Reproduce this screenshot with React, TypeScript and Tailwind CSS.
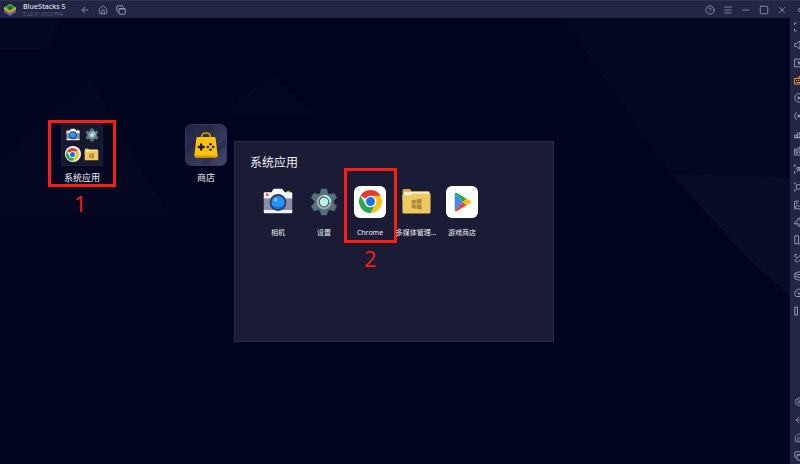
import React from 'react';
import { ArrowLeft, ChevronsLeft, CircleHelp, House, Menu, Minus, Settings, Square, X } from 'lucide-react';

type IconProps = { className?: string };

const CameraIcon: React.FC<IconProps> = ({ className }) => (
  <svg viewBox="0 0 32 32" className={className} aria-hidden="true">
    <rect x="25" y="4" width="4" height="4" rx="1" fill="#6abf1e" />
    <path d="M2 5.500h7l2-3q.5-.7 1.300-.7h7.400q.8 0 1.300.7l2 3h7q1.200 0 1.200 1.200v6.300H.8V6.700q0-1.200 1.200-1.200z" fill="#f7f9ff" />
    <path d="M.8 12h30.400v13H.8z" fill="#8b8dab" />
    <path d="M.8 24.500h30.400v2.300q0 1.200-1.200 1.200H2q-1.200 0-1.200-1.200z" fill="#eef1fc" />
    <rect x="3" y="7" width="3" height="2.500" rx="1" fill="#f0483c" />
    <circle cx="16" cy="16.500" r="9" fill="#333a5c" />
    <circle cx="16" cy="16.500" r="7" fill="#2296ff" />
    <path d="M10 20a7 7 0 0 0 12.500-.5q-6 3-12.500.5z" fill="#1574e5" />
    <circle cx="13.500" cy="13.500" r="1.600" fill="#8fd2ff" />
  </svg>
);

const GearIcon: React.FC<IconProps> = ({ className }) => (
  <svg viewBox="0 0 32 32" className={className} aria-hidden="true">
    <g fill="#587078" stroke="#587078" strokeWidth="1.500" strokeLinejoin="round">
      <circle cx="16" cy="16" r="10.500" />
      {[0, 60, 120, 180, 240, 300].map((deg) => (
        <path key={deg} d="M12 7l1.300-5.500h5.400L20 7z" transform={`rotate(${deg} 16 16)`} />
      ))}
    </g>
    <circle cx="16" cy="16" r="7.300" fill="#4c5e69" stroke="#a5b1b8" strokeWidth="2.200" />
    <path d="M16 8.700a7.300 7.300 0 0 1 7.300 7.300" fill="none" stroke="#a5f7e2" strokeWidth="2.200" />
    <circle cx="16" cy="16" r="4.200" fill="#a0ffe6" stroke="#e2e8e8" strokeWidth="1.200" />
  </svg>
);

const ChromeLogo: React.FC<IconProps> = ({ className }) => (
  <svg viewBox="0 0 24 24" className={className} aria-hidden="true">
    <path d="M12 12L1.600 6A12 12 0 0 1 22.400 6z" fill="#e33b2e" />
    <path d="M12 6h10.400A12 12 0 0 1 12 24l5.200-9z" fill="#fcc31e" />
    <path d="M1.600 6l5.200 9A6 6 0 0 0 17.200 15L12 24A12 12 0 0 1 1.600 6z" fill="#2da44e" />
    <circle cx="12" cy="12" r="6" fill="#fff" />
    <circle cx="12" cy="12" r="4.700" fill="#1a73e8" />
  </svg>
);

const ChromeIcon = () => (
  <span className="flex size-8 items-center justify-center rounded-md bg-white">
    <ChromeLogo className="size-[23px]" />
  </span>
);

const FolderIcon: React.FC<IconProps> = ({ className }) => (
  <svg viewBox="0 0 32 32" className={className} aria-hidden="true">
    <path d="M1.500 5q0-2 2-2h5q1 0 1.500 1l.8 1.500H28q2 0 2 2V16H1.500z" fill="#d9ac4e" />
    <path d="M3 6h26V12H3z" fill="#f6ecd0" />
    <path d="M1.500 9.500h8.300l2-1.500h18.700v19q0 1.500-1.500 1.500H3q-1.500 0-1.500-1.500z" fill="#f0c860" />
    <path d="M11 14.800l4.200-.7v4.300H11zM16 14l5.200-.8v5.200H16zM11 19.200h4.200v4.300l-4.200-.7zM16 19.200h5.200v5.200L16 23.600z" fill="#ab8a3c" />
  </svg>
);

const PlayIcon = () => (
  <span className="flex size-8 items-center justify-center rounded-md bg-white">
    <svg viewBox="0 0 20 22" className="h-5 w-5" aria-hidden="true">
      <path d="M2 1.500v19L11 11z" fill="#4285f4" />
      <path d="M2 1.500Q3 .3 4.500 1.200L15 7.300 11 11z" fill="#22a853" />
      <path d="M2 20.500q1 1.200 2.500.3L15 14.700 11 11z" fill="#ea4335" />
      <path d="M15 7.300l4 2.300q1.700 1.400 0 2.800l-4 2.300L11 11z" fill="#fbbc04" />
    </svg>
  </span>
);

const StoreIcon = () => (
  <svg viewBox="0 0 42 42" className="size-[42px]" aria-hidden="true">
    <defs>
      <linearGradient id="store" x1="0" y1="0" x2="1" y2="1">
        <stop offset="0" stopColor="#20233f" />
        <stop offset="1" stopColor="#41456a" />
      </linearGradient>
    </defs>
    <rect x=".5" y=".5" width="41" height="41" rx="6" fill="url(#store)" stroke="#34385a" />
    <path d="M1 23L23 1h8L1 31zM14 41L41 14v8L22 41z" fill="#191c35" opacity=".3" />
    <path d="M16.500 13.500q0-4.500 4.500-4.500t4.500 4.500" fill="none" stroke="#d29b0b" strokeWidth="1.600" />
    <path d="M12.500 13h17q1 0 1.100 1l2 17.500q.1 2-1.600 2H11q-1.700 0-1.600-2l2-17.500q.1-1 1.100-1z" fill="#ffc20e" />
    <path d="M9.500 31.500q0 2 1.500 2h20q1.700 0 1.600-2z" fill="#d99d08" />
    <path d="M15 19.500h2.400v2.300h2.300v2.400h-2.300v2.300H15v-2.300h-2.300v-2.400H15z" fill="#20233f" />
    <g fill="#20233f">
      <circle cx="25.500" cy="20.300" r="1.300" />
      <circle cx="25.500" cy="25.700" r="1.300" />
      <circle cx="22.800" cy="23" r="1.300" />
      <circle cx="28.200" cy="23" r="1.300" />
    </g>
  </svg>
);

const BlueStacksLogo = () => (
  <svg viewBox="0 0 28 28" className="size-[14px]" aria-hidden="true">
    <path d="M2 18l12 8 12-8v-3H2z" fill="#2a78e4" />
    <path d="M2 14.500l12 8 12-8V11H2z" fill="#f04025" />
    <path d="M2 11.500l12 8 12-8V9H2z" fill="#ffd21f" />
    <path d="M2 9.500L13 2.500q1-.6 2 0l11 7L15 17q-1 .6-2 0z" fill="#39c13d" />
    <path d="M8 9.500l6-4 6 4-6 4z" fill="#24263f" />
    <path d="M11 9.500l3-2 3 2-3 2z" fill="#f04025" />
  </svg>
);

// Two stacked windows
const RecentIcon: React.FC<{ size?: number; className?: string }> = ({ size = 10, className }) => (
  <svg width={size} height={size} viewBox="0 0 10 10" fill="none" stroke="currentColor" className={className} aria-hidden="true">
    <path d="M2.500 6.500h-1q-.7 0-.7-.7V1.500q0-.7.7-.7h5q.7 0 .7.700v1" />
    <rect x="3" y="3.500" width="6.300" height="5.700" rx=".6" />
    <path d="M3 4h6.300" />
  </svg>
);

const APPS = [
  { name: '相机', icon: <CameraIcon className="size-[30px]" /> },
  { name: '设置', icon: <GearIcon className="size-7" /> },
  { name: 'Chrome', icon: <ChromeIcon />, step: 2 },
  { name: '多媒体管理...', icon: <FolderIcon className="size-[31px]" /> },
  { name: '游戏商店', icon: <PlayIcon /> },
];

const NAV = [
  { label: '返回', Icon: ArrowLeft },
  { label: '主页', Icon: House },
  { label: '最近', Icon: RecentIcon },
];

const WINDOW_CONTROLS = [
  { label: '帮助', Icon: CircleHelp },
  { label: '菜单', Icon: Menu },
  { label: '最小化', Icon: Minus },
  { label: '最大化', Icon: Square },
  { label: '关闭', Icon: X },
];

// line = stroked outline, solid = filled parts, both on a 10x10 grid
const TOOLS = [
  { label: '全屏', line: 'M.5 3V1h2M7.500 1h2v2M9.500 7v2h-2M2.500 9h-2V7' },
  { label: '音量', line: 'M.7 3.500v3h1.800L6 9V1L2.500 3.500zM8 3.500q1.200 1.500 0 3' },
  { label: '锁定光标', line: 'M.6 1.200h8.800v7.600H.6z', solid: 'M3.200 3l4.300 1.600-1.800.8-.8 1.900z' },
  { label: '键盘控制', line: 'M.6 3.500h8.800v5.500H.6zM5 3.500V1.500h2', solid: 'M2 5h1.200v1H2zM4 5h1.200v1H4zM6 5h1.200v1H6zM2.500 7h5v1h-5z', active: true },
  { label: '同步操作', line: 'M8 1.800A4.300 4.300 0 1 0 9.300 5', solid: 'M3.700 3l3.500 2-3.500 2z' },
  { label: '宏', line: 'M3 1.200a4.300 4.300 0 0 0 0 7.600M6 .9a4.300 4.300 0 0 1 1 7.700', solid: 'M3.600 3.600h2.800v2.800H3.600z' },
  { label: '多开', line: 'M.6 6h2.200v2.800H.6zM3.500 3.800h2.200v5H3.500zM6.500 1.500h2.200v7.300H6.500z', solid: 'M.6 8h8.800v1H.6z' },
  { label: '安装 APK', line: 'M.6 3h8.800v6H.6zM.6 5h8.800M5 3V1h3v2', solid: 'M2 6h2v1.500H2zM5 6h3v1.500H5z' },
  { label: '截图', line: 'M.5 3V1h1.700M7.800 1h1.700v2M9.500 7v2H7.800M2.200 9H.5V7M3 3.500h4v3.200H3z', solid: 'M4 4.300h2v1.500H4z' },
  { label: '录屏', line: 'M.5 2.500V1h1.200M8.300 1h1.200v1.500M9.500 7.500V9H8.300M1.700 9H.5V7.500M2.300 2.800h5.400v4.400H2.300z' },
  { label: '媒体', line: 'M5 1.200H.6v7.600h8.800V5M1 8l2.500-3 2 2L7 5.500', solid: 'M6 1h3v2.500H6zM2 2.500h1.500V4H2z' },
  { label: '飞行', line: 'M4 9V6.500L.6 7V5.500L4 3.300V1.500q1-1.200 2 0v1.800l3.400 2.200V7L6 6.500V9z' },
  { label: '旋转', line: 'M.8.800h3.700v8H.8zM6 5h3.400v3.800H4.500' },
  { label: '摇一摇', line: 'M1 4V1.500h2M.8 7.500L6.500 2l2.500 2.500L3.500 9.200zM3 5L1.500 3.500' },
  { label: '内存', line: 'M.8 2.500Q5-.7 9.200 2.500v5Q5 10.700.8 7.500zM.8 2.500Q5 5.500 9.200 2.500M.8 5Q5 8 9.200 5' },
  { label: '性能', line: 'M2 8.500A4.300 4.300 0 1 1 8 8.500zM5 5.500L3 3.500', solid: 'M4 5h2v1.500H4z' },
  { label: '分屏', line: 'M.8 1h2.700v8H.8zM6 1h.8M6 5h.8M6 9h.8' },
];

const SYSTEM_TOOLS = [
  { label: '设置', Icon: Settings },
  ...NAV,
];

// Faint facets behind the desktop
const Wallpaper = () => (
  <svg
    viewBox="0 0 790 446"
    preserveAspectRatio="none"
    className="absolute inset-0 size-full"
    aria-hidden="true"
  >
    <path d="M0 0h62L46 31H0z" fill="#040822" />
    <path d="M563 0h227v158H671z" fill="#030722" />
    <path d="M671 156l119 3v119l-42-37z" fill="#080c27" />
    <path d="M90 62l78 135H0v-52z" fill="#030721" />
    <path d="M272 55l40 41h-88z" fill="#020620" />
  </svg>
);

const App: React.FC = () => {
  return (
    <div className="flex min-h-screen flex-col bg-[#00041f] font-['Noto_Sans','Noto_Sans_CJK_SC',sans-serif] text-[#f0f1f8]">
      {/* Title bar */}
      <header className="flex h-[18px] shrink-0 items-center overflow-hidden border-t border-[#30334e] bg-[#232642] pl-[3px] text-[#9496b3]">
        <BlueStacksLogo />
        <div className="ml-1.5 w-[57px] font-['Open_Sans',sans-serif] whitespace-nowrap">
          <h1 className="text-[7px] leading-[8px] font-semibold text-[#d8d9e6]">BlueStacks 5</h1>
          <p className="text-[5px] leading-[6px] text-[#62658a]">5.22.91.6503 P64</p>
        </div>
        <nav className="flex gap-2">
          {NAV.map(({ label, Icon }) => (
            <button key={label} type="button" aria-label={label}>
              <Icon size={10} />
            </button>
          ))}
        </nav>
        <div className="ml-auto flex gap-2">
          {WINDOW_CONTROLS.map(({ label, Icon }) => (
            <button key={label} type="button" aria-label={label}>
              <Icon size={10} />
            </button>
          ))}
          <button type="button" aria-label="收起" className="w-[5px] overflow-hidden">
            <ChevronsLeft size={12} className="max-w-none" />
          </button>
        </div>
      </header>

      <div className="flex flex-1">
        {/* Desktop */}
        <main className="relative flex-1 pt-[106px] pl-5">
          <Wallpaper />
          <ul className="relative flex text-[9px] leading-3">
            <li className="relative w-[124px]">
              <button type="button" className="flex w-full flex-col items-center gap-1.5">
                <span className="grid size-[42px] grid-cols-2 place-items-center border border-[#1c2038] bg-[#15182f] p-px">
                  <CameraIcon className="size-[14px]" />
                  <GearIcon className="size-[14px]" />
                  <span className="flex size-4 items-center justify-center rounded-full bg-white">
                    <ChromeLogo className="size-[13px]" />
                  </span>
                  <FolderIcon className="size-[15px]" />
                </span>
                系统应用
              </button>
              <div className="pointer-events-none absolute -top-1 left-7 h-[67px] w-[68px] border-3 border-[#fb1d13]" />
              <span className="absolute top-[67px] left-[54px] font-['Open_Sans',sans-serif] text-[22px] leading-6 text-[#fb1d13]">1</span>
            </li>
            <li className="w-[124px]">
              <button type="button" className="flex w-full flex-col items-center gap-1.5">
                <StoreIcon />
                商店
              </button>
            </li>
          </ul>

          {/* Opened folder */}
          <div className="absolute inset-0 grid place-items-center pr-0.5">
            <section className="h-[201px] w-[320px] border border-[#2a2d49] bg-[#1a1c36] px-[15px] pt-[13px]">
              <h2 className="text-[12px] leading-4">系统应用</h2>
              <ul className="mt-[15px] flex pl-[5px]">
                {APPS.map((app) => (
                  <li key={app.name} className="relative w-[46px]">
                    <button type="button" className="flex w-full flex-col items-center gap-2.5 text-[7px] leading-[10px] whitespace-nowrap">
                      <span className="grid size-8 place-items-center">{app.icon}</span>
                      {app.name}
                    </button>
                    {app.step && (
                      <>
                        <div className="pointer-events-none absolute -top-[18px] -left-[3px] h-[75px] w-[53px] border-3 border-[#fb1d13]" />
                        <span className="absolute top-[60px] left-[17px] font-['Open_Sans',sans-serif] text-[22px] leading-6 text-[#fb1d13]">{app.step}</span>
                      </>
                    )}
                  </li>
                ))}
              </ul>
            </section>
          </div>
        </main>

        {/* Tool strip */}
        <aside className="flex w-[10px] shrink-0 flex-col justify-between overflow-hidden bg-[#232642] pt-1 pb-[3px] pl-1 text-[#9496b3]">
          <div className="flex h-[294px] flex-col justify-between">
            {TOOLS.map(({ label, line, solid, active }) => (
              <button key={label} type="button" aria-label={label} className={active ? 'text-[#d9992e]' : ''}>
                <svg viewBox="0 0 10 10" className="size-[10px] max-w-none" aria-hidden="true">
                  <path d={line} fill="none" stroke="currentColor" />
                  {solid && <path d={solid} fill="currentColor" />}
                </svg>
              </button>
            ))}
          </div>
          <div className="flex flex-col gap-2">
            {SYSTEM_TOOLS.map(({ label, Icon }) => (
              <button key={label} type="button" aria-label={label}>
                <Icon size={10} className="max-w-none" />
              </button>
            ))}
          </div>
        </aside>
      </div>
    </div>
  );
};

export default App;
